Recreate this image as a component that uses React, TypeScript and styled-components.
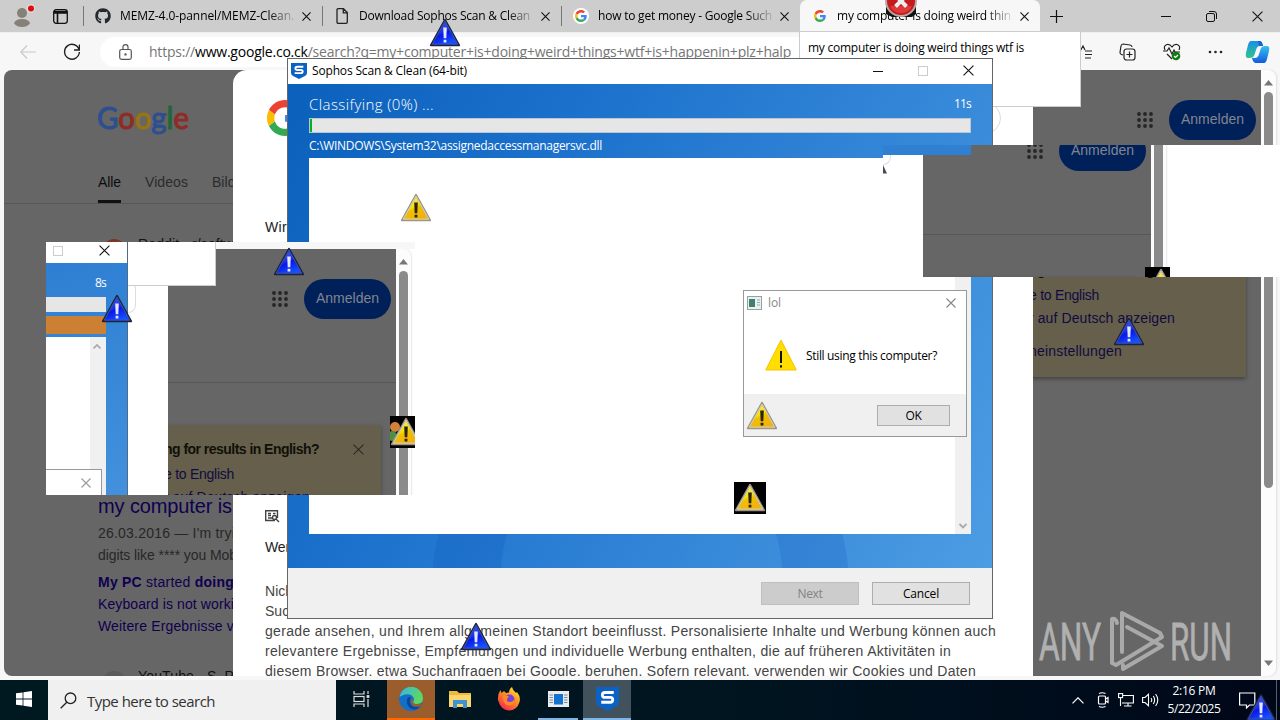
import React, { useLayoutEffect, useRef, useState } from "react";
import styled, { createGlobalStyle } from "styled-components";
import { FaGithub } from "react-icons/fa";

const GlobalStyle = createGlobalStyle`
  * {
    box-sizing: border-box;
  }

  body {
    margin: 0;
    overflow: hidden;
    font-family: "Open Sans", "Noto Sans", sans-serif;
    font-size: 12px;
    color: #000;
  }

  svg {
    display: block;
    flex-shrink: 0;
  }
`;

/* ---------- text ---------- */

const Label = styled.span<{ $size?: number; $color?: string; $weight?: number; $arial?: boolean }>`
  display: inline-block;
  flex-shrink: 0;
  width: max-content;
  white-space: pre;
  font-size: ${(p) => p.$size || 12}px;
  line-height: 20px;
  color: ${(p) => p.$color || "#000"};
  font-weight: ${(p) => p.$weight || 400};
  font-family: ${(p) =>
    p.$arial ? '"Liberation Sans", Arial, sans-serif' : '"Open Sans", "Noto Sans", sans-serif'};
`;

type TextProps = {
  width: number;
  size?: number;
  color?: string;
  weight?: number;
  arial?: boolean;
  children: React.ReactNode;
};

// tracks the text in or out until it is exactly `width` wide
const Text: React.FC<TextProps> = ({ width, size, color, weight, arial, children }) => {
  const ref = useRef<HTMLSpanElement>(null);
  const [spacing, setSpacing] = useState(0);

  useLayoutEffect(() => {
    const el = ref.current;
    if (!el) return;
    const natural = el.getBoundingClientRect().width;
    setSpacing((width - natural) / (el.textContent || " ").length);
  }, [width]);

  return (
    <Label
      ref={ref}
      $size={size}
      $color={color}
      $weight={weight}
      $arial={arial}
      style={{ letterSpacing: spacing }}
    >
      {children}
    </Label>
  );
};

/* ---------- icons ---------- */

const Cross: React.FC<{ size?: number; color?: string }> = ({ size = 10, color = "#111" }) => (
  <svg width={size} height={size} viewBox="0 0 10 10" stroke={color} strokeWidth={11 / size}>
    <path d="M0.5 0.5L9.5 9.5M9.5 0.5L0.5 9.5" />
  </svg>
);

const GoogleG: React.FC<{ size: number }> = ({ size }) => (
  <svg width={size} height={size} viewBox="0 0 48 48">
    <path fill="#EA4335" d="M24 9.5c3.54 0 6.71 1.22 9.21 3.6l6.85-6.85C35.9 2.38 30.47 0 24 0 14.62 0 6.51 5.38 2.56 13.22l7.98 6.19C12.43 13.72 17.74 9.5 24 9.5z" />
    <path fill="#4285F4" d="M46.98 24.55c0-1.57-.15-3.09-.38-4.55H24v9.02h12.94c-.58 2.96-2.26 5.48-4.78 7.18l7.73 6c4.51-4.18 7.09-10.36 7.09-17.65z" />
    <path fill="#FBBC05" d="M10.53 28.59c-.48-1.45-.76-2.99-.76-4.59s.27-3.14.76-4.59l-7.98-6.19C.92 16.46 0 20.12 0 24c0 3.88.92 7.54 2.56 10.78l7.97-6.19z" />
    <path fill="#34A853" d="M24 48c6.48 0 11.93-2.13 15.89-5.81l-7.73-6c-2.15 1.45-4.92 2.3-8.16 2.3-6.26 0-11.57-4.22-13.47-9.91l-7.98 6.19C6.51 42.62 14.62 48 24 48z" />
  </svg>
);

const SophosShield: React.FC<{ width: number; height: number }> = ({ width, height }) => (
  <svg width={width} height={height} viewBox="0 0 24 24" preserveAspectRatio="none">
    <path d="M0 0H24V15Q24 18 21 19.5L12 24L3 19.5Q0 18 0 15Z" fill="#0b62c4" />
    <path d="M18.5 5.5H9.5Q6.6 5.5 6.6 8T9.5 10.4H15Q17.5 10.4 17.5 12.8T15 15.2H5.5" fill="none" stroke="#fff" strokeWidth="2.9" />
  </svg>
);

const WarnIcon: React.FC<{ blue?: boolean }> = ({ blue }) => {
  const id = blue ? "warnBlue" : "warnYellow";
  return (
    <svg width="32" height="32" viewBox="0 0 32 32">
      <defs>
        <linearGradient id={id} x1="0" y1="0" x2="0.5" y2="1">
          <stop offset="0" stopColor={blue ? "#5a78ff" : "#fff59a"} />
          <stop offset="0.55" stopColor={blue ? "#1a2df0" : "#f8e000"} />
          <stop offset="0.62" stopColor={blue ? "#0a18e8" : "#f2bf00"} />
          <stop offset="1" stopColor={blue ? "#1450ff" : "#f3b010"} />
        </linearGradient>
      </defs>
      <path d="M16 3L30 28.2H2Z" fill={`url(#${id})`} stroke={blue ? "#1b2242" : "#9b968a"} strokeWidth="2.2" strokeLinejoin="round" />
      <path d="M16 4.2L28.7 27.2H3.3Z" fill="none" stroke={blue ? "#3f5cc9" : "#e8dfae"} strokeWidth="0.9" />
      <path d="M14.2 10.5H17.8L17.3 21.3H14.7ZM14.6 22.7H17.4V25.6H14.6Z" fill={blue ? "#e4e8ff" : "#26250f"} />
    </svg>
  );
};

const ErrorIcon = () => (
  <svg width="34" height="34" viewBox="0 0 34 34">
    <path d="M2 19V30L8 33H28L32 30V19Z" fill="#111" />
    <circle cx="17" cy="17" r="15" fill="#c51a1e" stroke="#b9a9a9" strokeWidth="2" />
    <path d="M6 22A12 12 0 0 0 28 22Z" fill="#de3a37" />
    <path d="M11.5 11.5L22.5 22.5M22.5 11.5L11.5 22.5" stroke="#eee" strokeWidth="4" />
  </svg>
);

/* ---------- browser chrome ---------- */

const Desktop = styled.div`
  position: relative;
  width: 1280px;
  height: 720px;
  overflow: hidden;
  display: flex;
  flex-direction: column;
  background: #f7f7f7;
`;

const TabStrip = styled.div`
  display: flex;
  align-items: center;
  height: 32px;
  background: #cdcdcd;
`;

const StripIcons = styled.div`
  display: flex;
  align-items: center;
  gap: 18px;
  width: 83px;
  padding-left: 13px;
`;

const Tab = styled.div<{ $active?: boolean; $width: number }>`
  display: flex;
  align-items: center;
  width: ${(p) => p.$width}px;
  height: ${(p) => (p.$active ? "32px" : "20px")};
  padding: 0 10px 0 11px;
  border-left: 1px solid ${(p) => (p.$active ? "#f7f7f7" : "#777")};
  border-radius: ${(p) => (p.$active ? "7px 7px 0 0" : "0")};
  background: ${(p) => (p.$active ? "#f7f7f7" : "transparent")};
`;

const TabIcon = styled.div<{ $white?: boolean }>`
  display: grid;
  place-items: center;
  width: 16px;
  height: 16px;
  margin-right: 9px;
  flex-shrink: 0;
  border-radius: 50%;
  background: ${(p) => (p.$white ? "#fff" : "transparent")};
`;

const TabTitle = styled.div`
  flex: 1;
  min-width: 0;
  overflow: hidden;
  display: flex;
  mask-image: linear-gradient(90deg, #000 148px, transparent 178px);
`;

const TabClose = styled.div`
  flex-shrink: 0;
  margin-right: 1px;
`;

const CaptionButtons = styled.div`
  display: flex;
  align-items: center;
  flex: 1;
  padding: 0 17px 0 10px;
  justify-content: space-between;
`;

const WindowControls = styled.div`
  display: flex;
  align-items: center;
  gap: 35px;
`;

const Toolbar = styled.div`
  display: flex;
  align-items: center;
  height: 38px;
  padding-left: 20px;
  border-top: 1px solid #efefef;
  background: #f7f7f7;
`;

const AddressBar = styled.div`
  display: flex;
  align-items: center;
  gap: 17px;
  width: 960px;
  height: 30px;
  margin-left: 20px;
  padding-left: 19px;
  border-radius: 15px;
  background: #fff;
`;

const ToolbarIcons = styled.div`
  display: flex;
  align-items: center;
  flex: 1;
  gap: 27px;
  padding-left: 14px;

  & > svg:last-child {
    margin-left: -5px;
  }
`;

const Toolbox = () => (
  <ToolbarIcons>
    <svg width="18" height="18" viewBox="0 0 18 18" fill="none" stroke="#222" strokeWidth="1.2">
      <path d="M11 8H18M11 11.5H18M11 15H17M3 8L6.5 7.5L9 3L11 7M4 16L5 11L2 8" />
    </svg>
    <svg width="17" height="18" viewBox="0 0 17 18" fill="none" stroke="#222" strokeWidth="1.2">
      <path d="M4 12L2.5 11.5Q1 11 1 9.500L2 3Q2.300 1 4 1L11 2Q13 2.500 13 4" />
      <rect x="5" y="6" width="11" height="11" rx="2.500" />
      <path d="M10.500 8.500V14.500M7.500 11.500H13.500" />
    </svg>
    <svg width="18" height="18" viewBox="0 0 18 18" fill="none" stroke="#222" strokeWidth="1.2">
      <path d="M2 7Q0 3 4 1.500Q7 1 9 4Q11 1 14 1.500Q18 3 16 7M0 8H4L6 5L9 11L11 7L12 9H17M4 11L9 16" />
      <circle cx="13" cy="13" r="4.300" fill="#127a12" stroke="none" />
      <path d="M11 13L12.500 14.500L15 12" stroke="#fff" />
    </svg>
    <svg width="15" height="4" viewBox="0 0 15 4" fill="#222">
      <circle cx="2" cy="2" r="1.300" />
      <circle cx="7.500" cy="2" r="1.300" />
      <circle cx="13" cy="2" r="1.300" />
    </svg>
    <svg width="25" height="24" viewBox="0 0 25 24">
      <defs>
        <linearGradient id="copilotA" x1="0" y1="0" x2="0" y2="1">
          <stop offset="0" stopColor="#1a8fe8" />
          <stop offset="1" stopColor="#2fc48d" />
        </linearGradient>
        <linearGradient id="copilotB" x1="0" y1="0" x2="0" y2="1">
          <stop offset="0" stopColor="#35c3ef" />
          <stop offset="1" stopColor="#1559e0" />
        </linearGradient>
      </defs>
      <path d="M6 1H14Q17 1 18 6H15Q12 6 11 10L9 16Q8 18 5 18H3Q0 18 1 13L3 5Q4 1 6 1Z" fill="url(#copilotA)" />
      <path d="M19 23H11Q8 23 7 18H10Q13 18 14 14L16 8Q17 6 20 6H22Q25 6 24 11L22 19Q21 23 19 23Z" fill="url(#copilotB)" />
      <path d="M13 1H15Q17 1 18 6H14Z" fill="#1c5fd8" />
    </svg>
  </ToolbarIcons>
);

/* ---------- page behind the consent sheet ---------- */

const PageFrame = styled.div`
  display: flex;
  height: 610px;
  padding: 0 4px 4px;
`;

const Page = styled.div`
  display: flex;
  width: 1257px;
  height: 606px;
  overflow: hidden;
  border-radius: 8px 0 0 8px;
  background: #666;
`;

const ResultsColumn = styled.div`
  display: flex;
  flex-direction: column;
  width: 229px;
  height: 606px;
  overflow: hidden;

  & > * {
    flex-shrink: 0;
  }
`;

const LogoRow = styled.div`
  height: 101px;
  padding: 30px 0 0 94px;
`;

const PageTabs = styled.div`
  display: flex;
  gap: 24px;
  height: 33px;
  padding-left: 94px;
  border-bottom: 1px solid #575757;
`;

const PageTab = styled.div<{ $active?: boolean }>`
  height: 32px;
  padding-top: 1px;
  flex-shrink: 0;
  border-bottom: 3px solid ${(p) => (p.$active ? "#111" : "transparent")};
`;

const SourceRow = styled.div`
  display: flex;
  align-items: center;
  gap: 12px;
  height: 24px;
  margin-top: 28px;
  padding-left: 98px;
`;

const SourceDot = styled.div<{ $color: string }>`
  width: 24px;
  height: 24px;
  margin-top: 14px;
  flex-shrink: 0;
  border-radius: 50%;
  background: ${(p) => p.$color};
`;

const ResultBody = styled.div`
  display: flex;
  flex-direction: column;
  gap: 2px;
  height: 140px;
  margin-top: 240px;
  padding-left: 94px;
`;

const ResultLine = styled.div`
  height: 20px;
  margin-top: 5px;
`;

const SideColumn = styled.div`
  width: 228px;
  height: 606px;
  flex-shrink: 0;
  overflow: hidden;
  background: #666;
`;

const SideHeader = styled.div`
  display: flex;
  justify-content: flex-end;
  gap: 16px;
  height: 134px;
  padding: 30px 5px 0 0;
  border-bottom: 1px solid #575757;
`;

const AppsGrid = styled.svg`
  margin-top: 12px;
`;

const SignIn = styled.div`
  display: grid;
  place-items: center;
  width: 87px;
  height: 40px;
  padding-bottom: 2px;
  border-radius: 20px;
  background: #00205a;
`;

const LanguageCard = styled.div`
  display: flex;
  flex-direction: column;
  width: 226px;
  height: 131px;
  margin: 42px 0 0 -13px;
  padding: 14px 17px 0 9px;
  background: #665f4b;
  box-shadow: 0 2px 4px rgba(0, 0, 0, 0.35);
`;

const CardHeading = styled.div`
  display: flex;
  align-items: center;
  justify-content: space-between;
  height: 20px;
  margin-bottom: 5px;
`;

const CardLink = styled.div<{ $gap: number }>`
  height: 20px;
  margin-bottom: ${(p) => p.$gap}px;
`;

const PageSide = () => (
  <SideColumn>
    <SideHeader>
      <AppsGrid width="16" height="16" viewBox="0 0 16 16" fill="#262626">
        {[2, 8, 14].map((y) => [2, 8, 14].map((x) => <circle key={`${x}-${y}`} cx={x} cy={y} r="1.900" />))}
      </AppsGrid>
      <SignIn>
        <Text width={63} size={14} color="#80858f" arial>
          Anmelden
        </Text>
      </SignIn>
    </SideHeader>
    <LanguageCard>
      <CardHeading>
        <Text width={155} size={14} color="#101008" weight={700} arial>
          ng for results in English?
        </Text>
        <Cross size={11} color="#2a2a24" />
      </CardHeading>
      <CardLink $gap={3}>
        <Text width={70} size={14} color="#100b42" arial>
          e to English
        </Text>
      </CardLink>
      <CardLink $gap={13}>
        <Text width={146} size={14} color="#100b42" arial>
          r auf Deutsch anzeigen
        </Text>
      </CardLink>
      <Text width={93} size={14} color="#100b42" arial>
        neinstellungen
      </Text>
    </LanguageCard>
  </SideColumn>
);

const ScrollTrack = styled.div`
  display: flex;
  flex-direction: column;
  align-items: center;
  width: 15px;
  height: 606px;
  padding: 9px 0 9px;
  flex-shrink: 0;
  border-radius: 0 8px 8px 0;
  background: #fcfcfc;
  box-shadow: 1px 0 2px rgba(0, 0, 0, 0.1);
`;

const ScrollThumb = styled.div`
  width: 9px;
  height: 396px;
  margin: 6px 0 auto;
  border-radius: 5px;
  background: #8a8a8a;
`;

const PageScrollbar = () => (
  <ScrollTrack>
    <svg width="9" height="7" viewBox="0 0 9 7" fill="#777">
      <path d="M4.500 1L9 6.500H0Z" />
    </svg>
    <ScrollThumb />
    <svg width="9" height="7" viewBox="0 0 9 7" fill="#777">
      <path d="M4.500 6L9 0.500H0Z" />
    </svg>
  </ScrollTrack>
);

const ConsentSheet = styled.div`
  display: flex;
  flex-direction: column;
  width: 800px;
  height: 606px;
  padding: 30px 32px 0;
  flex-shrink: 0;
  border-radius: 14px 14px 0 0;
  background: #fff;
`;

const SheetHeader = styled.div`
  display: flex;
  justify-content: space-between;
  height: 116px;
  margin-bottom: 1px;
  padding-left: 2px;
  flex-shrink: 0;
`;

const LanguagePill = styled.div`
  width: 120px;
  height: 32px;
  margin-top: 2px;
  border: 1px solid #dadce0;
  border-radius: 16px;
`;

const SheetIcon = styled.div`
  margin: 272px 0 14px;
`;

const SheetParagraph = styled.div`
  display: flex;
  flex-direction: column;
  margin-top: 24px;
`;

/* ---------- scan window ---------- */

const ScanWindow = styled.div`
  position: absolute;
  left: 287px;
  top: 58px;
  width: 706px;
  height: 561px;
  display: flex;
  flex-direction: column;
  border: 1px solid #666;
  background: #f0f0f0;
`;

const ScanTitle = styled.div`
  display: flex;
  align-items: center;
  height: 25px;
  padding: 0 18px 2px 3px;
  gap: 5px;
  background: #fff;
`;

const ScanControls = styled.div`
  display: flex;
  align-items: center;
  gap: 35px;
  margin-left: auto;
`;

const ScanBody = styled.div`
  display: grid;
  grid-template-rows: 34px 15px 25px 376px;
  height: 484px;
  padding: 0 21px;
  background: linear-gradient(118deg, #0a60bb 0%, #1a70cb 30%, #2f82d5 60%, #4c9de3 100%);
`;

const ScanStatus = styled.div`
  display: flex;
  justify-content: space-between;
  align-items: center;
  padding-top: 5px;
`;

const ProgressTrack = styled.div`
  border: 1px solid #bcc6d0;
  background: #e6e6e6;
`;

const ProgressFill = styled.div`
  height: 13px;
  background: #06b025;
`;

const ScanPath = styled.div`
  padding-top: 3px;
`;

const ScanList = styled.div`
  display: flex;
  justify-content: flex-end;
  background: #fff;
`;

const ListScroll = styled.div`
  display: flex;
  align-items: flex-end;
  justify-content: center;
  width: 16px;
  padding-bottom: 5px;
  background: #f0f0f0;
`;

const RingStrip = styled.svg`
  margin-left: 123px;
`;

const ScanFooter = styled.div`
  display: flex;
  justify-content: flex-end;
  gap: 13px;
  padding: 14px 22px 0 0;
`;

const Button = styled.div<{ $width: number; $disabled?: boolean }>`
  display: grid;
  place-items: center;
  width: ${(p) => p.$width}px;
  height: ${(p) => (p.$width > 80 ? 23 : 21)}px;
  border: 1px solid ${(p) => (p.$disabled ? "#bfbfbf" : "#adadad")};
  background: ${(p) => (p.$disabled ? "#ccc" : "#e1e1e1")};
`;

/* ---------- message box ---------- */

const MessageBox = styled.div`
  position: absolute;
  left: 743px;
  top: 290px;
  width: 224px;
  height: 147px;
  display: flex;
  flex-direction: column;
  border: 1px solid #999;
  background: #fff;
`;

const MessageTitle = styled.div`
  display: flex;
  align-items: center;
  gap: 6px;
  height: 24px;
  padding: 0 10px 0 3px;

  & > svg:last-child {
    margin-left: auto;
  }
`;

const MessageContent = styled.div`
  display: flex;
  align-items: center;
  gap: 9px;
  height: 79px;
  padding: 2px 0 0 21px;

  & > svg {
    margin-top: -2px;
  }
`;

const MessageFooter = styled.div`
  display: flex;
  justify-content: flex-end;
  flex: 1;
  padding: 11px 16px 0 0;
  background: #f0f0f0;
`;

/* ---------- torn copies of the screen ---------- */

const Shard = styled.div<{ $x: number; $y: number; $w: number; $h: number }>`
  position: absolute;
  left: ${(p) => p.$x}px;
  top: ${(p) => p.$y}px;
  width: ${(p) => p.$w}px;
  height: ${(p) => p.$h}px;
  overflow: hidden;
  display: flex;
  background: #fff;
`;

const ShardSlice = styled.div<{ $shift: number }>`
  display: flex;
  align-items: flex-start;
  height: 606px;
  margin-top: ${(p) => p.$shift}px;
`;

const PillArc = styled.div`
  width: 8px;
  height: 32px;
  margin-top: 32px;
  border: 1px solid #dadce0;
  border-left: none;
  border-radius: 0 16px 16px 0;
`;

const SheetGap = styled.div`
  width: 40px;
  height: 606px;
  background: #fff;
`;

const BluePatch = styled.div`
  position: absolute;
  left: 883px;
  top: 145px;
  width: 88px;
  height: 10px;
  background: #2f80d3;
`;

const TornCorner = styled.svg`
  position: absolute;
  left: 883px;
  top: 164px;
`;

const MiniWindow = styled.div`
  display: flex;
  flex-direction: column;
  width: 82px;
  height: 253px;
  border-right: 1px solid #4d6c8c;
  background: linear-gradient(160deg, #2c7dd2, #4391dc);
`;

const MiniTitle = styled.div`
  display: flex;
  align-items: center;
  gap: 36px;
  height: 21px;
  padding: 0 0 4px 7px;
  background: #fff;
`;

const MiniCounter = styled.div`
  display: flex;
  justify-content: flex-end;
  height: 34px;
  padding: 10px 21px 0 0;
`;

const MiniBar = styled.div<{ $color: string; $height: number; $gap: number }>`
  width: 60px;
  height: ${(p) => p.$height}px;
  margin-bottom: ${(p) => p.$gap}px;
  background: ${(p) => p.$color};
`;

const MiniList = styled.div`
  display: flex;
  flex-direction: column;
  justify-content: space-between;
  width: 60px;
  flex: 1;
  background: linear-gradient(90deg, #fff 44px, #f0f0f0 44px);
`;

const MiniArrow = styled.div`
  display: flex;
  justify-content: flex-end;
  padding: 7px 5px 0 0;
`;

const MiniDialog = styled.div`
  display: flex;
  align-items: center;
  justify-content: flex-end;
  width: 56px;
  height: 26px;
  padding-right: 10px;
  border: 1px solid #999;
  border-width: 1px 1px 0 0;
  background: #fff;
`;

const MiniTooltip = styled.div`
  position: absolute;
  left: 82px;
  top: 0;
  width: 88px;
  height: 44px;
  border: 1px solid #ccc;
  border-width: 0 1px 1px 0;
  background: #fff;
`;

const ToolbarStrip = styled.div`
  position: absolute;
  left: 170px;
  top: 0;
  width: 199px;
  height: 7px;
  background: #f7f7f7;
`;

const ScrapIcon = styled.div`
  position: absolute;
  left: 0;
  top: 0;

  & + svg {
    position: relative;
  }
`;

/* ---------- things on top ---------- */

const TabTooltip = styled.div`
  position: absolute;
  left: 799px;
  top: 31px;
  width: 282px;
  height: 76px;
  padding: 6px 8px;
  border: 1px solid #ccc;
  background: #fff;
`;

const Sticker = styled.div<{ $x: number; $y: number; $clip?: number; $black?: boolean }>`
  position: absolute;
  left: ${(p) => p.$x}px;
  top: ${(p) => p.$y}px;
  width: ${(p) => p.$clip || 34}px;
  height: ${(p) => (p.$black ? 32 : 34)}px;
  overflow: hidden;
  background: ${(p) => (p.$black ? "#000" : "transparent")};
`;

const Watermark = styled.svg`
  position: absolute;
  left: 1036px;
  top: 606px;
`;

/* ---------- taskbar ---------- */

const Taskbar = styled.div`
  display: flex;
  height: 40px;
  background: linear-gradient(90deg, #001820 0%, #001420 60%, #000718 100%);
`;

const TaskButton = styled.div<{ $width: number; $bg?: string; $line?: string; $gap?: number }>`
  display: grid;
  place-items: center;
  width: ${(p) => p.$width}px;
  height: 40px;
  margin-right: ${(p) => p.$gap || 0}px;
  background: ${(p) => p.$bg || "transparent"};
  border-bottom: 2px solid ${(p) => p.$line || "transparent"};
`;

const SearchBox = styled.div`
  display: flex;
  align-items: center;
  gap: 10px;
  width: 288px;
  padding: 1px 0 0 12px;
  background: #f0f0f0;
`;

const Tray = styled.div`
  display: flex;
  align-items: center;
  margin-left: auto;
  gap: 8px;
`;

const Clock = styled.div`
  display: flex;
  flex-direction: column;
  align-items: center;
  width: 58px;
  margin: 0 3px 0 -2px;

  & > span {
    line-height: 18px;
  }
`;

const TrayEnd = styled.div`
  display: flex;
  align-items: center;
  width: 43px;
  height: 40px;
  margin-right: 3px;
  padding-left: 5px;
  border-right: 1px solid #55606a;
`;

const blueWarnings = [
  [429, 17],
  [273, 246],
  [101, 293],
  [1113, 316],
  [460, 621],
  [1245, 692],
];

const paragraph: [string, number][] = [
  ["Nicht", 32],
  ["Such", 32],
  ["gerade ansehen, und Ihrem allgemeinen Standort beeinflusst. Personalisierte Inhalte und Werbung können auch", 731],
  ["relevantere Ergebnisse, Empfehlungen und individuelle Werbung enthalten, die auf früheren Aktivitäten in", 686],
  ["diesem Browser, etwa Suchanfragen bei Google, beruhen. Sofern relevant, verwenden wir Cookies und Daten", 711],
];

const App: React.FC = () => {
  return (
    <>
      <GlobalStyle />
      <Desktop>
        <TabStrip>
          <StripIcons>
            <svg width="22" height="24" viewBox="0 0 22 24">
              <circle cx="9" cy="9" r="5" fill="#858078" />
              <path d="M1 19.500Q2 15 9 15T17 19.500Q14 23 9 23T1 19.500Z" fill="#858078" />
              <circle cx="18" cy="4.500" r="4.300" fill="#ddd" />
              <circle cx="18" cy="4.500" r="3" fill="#e00b0b" />
            </svg>
            <svg width="15" height="15" viewBox="0 0 15 15" fill="none" stroke="#111" strokeWidth="1.300">
              <rect x="0.700" y="0.700" width="13.600" height="13.600" rx="2.500" />
              <path d="M1 2.500H14M1 4H14M4.500 4V14" strokeWidth="1.600" />
            </svg>
          </StripIcons>
          <Tab $width={239}>
            <TabIcon>
              <FaGithub size={16} color="#24292f" />
            </TabIcon>
            <TabTitle>
              <Text width={174}>MEMZ-4.0-pannel/MEMZ-Clean.</Text>
            </TabTitle>
            <TabClose>
              <Cross size={9} />
            </TabClose>
          </Tab>
          <Tab $width={239}>
            <TabIcon>
              <svg width="12" height="16" viewBox="0 0 12 16" fill="none" stroke="#222" strokeWidth="1.300">
                <path d="M1 2Q1 0.700 2.300 0.700H7.500L11.300 4.500V14Q11.300 15.300 10 15.300H2.300Q1 15.300 1 14ZM7.300 1V4.800H11" />
              </svg>
            </TabIcon>
            <TabTitle>
              <Text width={171}>Download Sophos Scan & Clean</Text>
            </TabTitle>
            <TabClose>
              <Cross size={9} />
            </TabClose>
          </Tab>
          <Tab $width={239}>
            <TabIcon $white>
              <GoogleG size={12} />
            </TabIcon>
            <TabTitle>
              <Text width={174}>how to get money - Google Such</Text>
            </TabTitle>
            <TabClose>
              <Cross size={9} />
            </TabClose>
          </Tab>
          <Tab $width={240} $active>
            <TabIcon>
              <GoogleG size={12} />
            </TabIcon>
            <TabTitle>
              <Text width={174}>my computer is doing weird thin</Text>
            </TabTitle>
            <TabClose>
              <Cross size={9} />
            </TabClose>
          </Tab>
          <CaptionButtons>
            <svg width="13" height="13" viewBox="0 0 13 13" stroke="#111" strokeWidth="1.200">
              <path d="M6.500 0V13M0 6.500H13" />
            </svg>
            <WindowControls>
              <svg width="10" height="10" viewBox="0 0 10 10" stroke="#111">
                <path d="M0 5.500H10" />
              </svg>
              <svg width="11" height="11" viewBox="0 0 11 11" fill="none" stroke="#111">
                <rect x="0.500" y="2.500" width="8" height="8" rx="1.500" />
                <path d="M3 0.500H8Q10.500 0.500 10.500 3V8" />
              </svg>
              <Cross size={11} />
            </WindowControls>
          </CaptionButtons>
        </TabStrip>

        <Toolbar>
          <svg width="17" height="14" viewBox="0 0 17 14" fill="none" stroke="#c8c8c8" strokeWidth="1.200">
            <path d="M16 7H1M7 0.500L0.800 7L7 13.500" />
          </svg>
          <svg width="43" height="18" viewBox="-27 0 43 18" fill="none" stroke="#222" strokeWidth="1.400">
            <path d="M15.200 7A7.400 7.400 0 1 0 15.400 9M15.500 1.500V7H10" />
          </svg>
          <AddressBar>
            <svg width="13" height="16" viewBox="0 0 13 16" fill="none" stroke="#555" strokeWidth="1.200">
              <rect x="0.700" y="5.500" width="11.600" height="9.800" rx="1.800" />
              <path d="M4 5.500V3Q4 0.700 6.500 0.700T9 3V5.500" />
              <circle cx="6.500" cy="10.400" r="0.600" fill="#555" />
            </svg>
            <Text width={642} size={14} color="#767676">
              https://
              <Label $size={14}>www.google.co.ck</Label>
              /search?q=my+computer+is+doing+weird+things+wtf+is+happenin+plz+halp
            </Text>
          </AddressBar>
          <Toolbox />
        </Toolbar>

        <PageFrame>
          <Page>
            <ResultsColumn>
              <LogoRow>
                <svg width="95" height="42" viewBox="0 0 95 42" fontFamily="Lato, sans-serif" fontSize="31" strokeWidth="1.100">
                  <text x="-1" y="29" textLength="92" lengthAdjust="spacingAndGlyphs">
                    <tspan fill="#2c4f8f" stroke="#2c4f8f">G</tspan>
                    <tspan fill="#8e2c25" stroke="#8e2c25">o</tspan>
                    <tspan fill="#967413" stroke="#967413">o</tspan>
                    <tspan fill="#2c4f8f" stroke="#2c4f8f">g</tspan>
                    <tspan fill="#226637" stroke="#226637">l</tspan>
                    <tspan fill="#8e2c25" stroke="#8e2c25">e</tspan>
                  </text>
                </svg>
              </LogoRow>
              <PageTabs>
                <PageTab $active>
                  <Text width={23} size={14} color="#0c0c0c" arial>
                    Alle
                  </Text>
                </PageTab>
                <PageTab>
                  <Text width={43} size={14} color="#2b2b2b" arial>
                    Videos
                  </Text>
                </PageTab>
                <PageTab>
                  <Text width={36} size={14} color="#2b2b2b" arial>
                    Bilder
                  </Text>
                </PageTab>
              </PageTabs>
              <SourceRow>
                <SourceDot $color="#7a3622" />
                <Text width={96} size={14} color="#111" arial>
                  Reddit · r/softw
                </Text>
              </SourceRow>
              <ResultBody>
                <Text width={134} size={20} color="#10004f" arial>
                  my computer is
                </Text>
                <ResultLine>
                  <Text width={137} size={14} color="#272727" arial>
                    26.03.2016 — I'm tryi
                  </Text>
                </ResultLine>
                <Text width={139} size={14} color="#272727" arial>
                  digits like **** you Mob
                </Text>
                <ResultLine>
                  <Text width={136} size={14} color="#10004f" arial>
                    <b>My PC</b> started <b>doing</b>
                  </Text>
                </ResultLine>
                <Text width={136} size={14} color="#10004f" arial>
                  Keyboard is not worki
                </Text>
                <Text width={136} size={14} color="#10004f" arial>
                  Weitere Ergebnisse v
                </Text>
              </ResultBody>
              <SourceRow>
                <SourceDot $color="#5c5c5c" />
                <Text width={96} size={14} color="#111" arial>
                  YouTube · S. P
                </Text>
              </SourceRow>
            </ResultsColumn>

            <ConsentSheet>
              <SheetHeader>
                <GoogleG size={36} />
                <LanguagePill />
              </SheetHeader>
              <Text width={22} size={14} color="#202124" arial>
                Wir
              </Text>
              <SheetIcon>
                <svg width="15" height="14" viewBox="0 0 15 14" fill="none" stroke="#444" strokeWidth="1.400">
                  <path d="M10 11.500H0.700V1.700H12.500V9M3 4.500H6M3 6.500H6M8 4.500H10.500M3 9H7" />
                  <circle cx="9.500" cy="8.500" r="2" />
                  <path d="M11 10L14 13" />
                </svg>
              </SheetIcon>
              <Text width={25} size={14} color="#202124" arial>
                Wer
              </Text>
              <SheetParagraph>
                {paragraph.map(([line, width]) => (
                  <Text key={line} width={width} size={14} color="#444" arial>
                    {line}
                  </Text>
                ))}
              </SheetParagraph>
            </ConsentSheet>

            <PageSide />
          </Page>
          <PageScrollbar />
        </PageFrame>

        <Taskbar>
          <TaskButton $width={48}>
            <svg width="16" height="16" viewBox="0 0 16 16" fill="#fff">
              <path d="M0 2.300L6.600 1.400V7.600H0ZM7.400 1.300L16 0V7.600H7.400ZM0 8.400H6.600V14.600L0 13.700ZM7.400 8.400H16V16L7.400 14.700Z" />
            </svg>
          </TaskButton>
          <SearchBox>
            <svg width="17" height="17" viewBox="0 0 17 17" fill="none" stroke="#222" strokeWidth="1.300">
              <circle cx="10.500" cy="6.300" r="5.300" />
              <path d="M6.800 10.200L0.700 16.300" />
            </svg>
            <Text width={128} size={15} color="#333">
              Type here to search
            </Text>
          </SearchBox>
          <TaskButton $width={51}>
            <svg width="17" height="16" viewBox="0 0 17 16" fill="none" stroke="#ddd" strokeWidth="1.200">
              <path d="M1 0V3H11V0M1 16V13H11V16M15 0V3M15 8V16" />
              <rect x="1" y="5.500" width="10" height="5" />
              <rect x="14.200" y="4.700" width="1.600" height="1.600" fill="#ddd" />
            </svg>
          </TaskButton>
          <TaskButton $width={48} $bg="#9b5d2b" $line="#ff6a00">
            <svg width="24" height="24" viewBox="0 0 24 24">
              <defs>
                <linearGradient id="edgeTop" x1="0" y1="0" x2="1" y2="0.300">
                  <stop offset="0" stopColor="#35b4e8" />
                  <stop offset="1" stopColor="#5fd860" />
                </linearGradient>
              </defs>
              <circle cx="12" cy="12" r="12" fill="#1370c8" />
              <path d="M0.500 10A11.800 11.800 0 0 1 24 11.500Q24 16.500 18.500 17Q14 17 14 15Q15.500 13 14.500 10.500Q12 6 6 7.500Q2 8.500 0.500 10Z" fill="url(#edgeTop)" />
              <path d="M8.500 11Q6 18 12 21.500Q17 24 21.500 19.500Q14 21.500 11.500 17Q10 14 12 10.500Q10 9.500 8.500 11Z" fill="#0c479b" />
              <path d="M14 15Q14 17.300 18.500 17Q21 17 22.500 16L21.500 19Q16 20.500 13 18Q11 15 12.500 12Q15.500 12 14 15Z" fill="#9b5d2b" />
            </svg>
          </TaskButton>
          <TaskButton $width={49}>
            <svg width="22" height="18" viewBox="0 0 22 18">
              <path d="M0 1H8L10 3H22V17H0Z" fill="#f0b93a" />
              <path d="M0 5H22V17H0Z" fill="#fbd66c" />
              <path d="M4 10H18V18H14V14H8V18H4Z" fill="#3f93d2" />
            </svg>
          </TaskButton>
          <TaskButton $width={49} $gap={5}>
            <svg width="24" height="24" viewBox="0 0 24 24">
              <defs>
                <linearGradient id="foxFire" x1="0.900" y1="0" x2="0.200" y2="1">
                  <stop offset="0" stopColor="#fff04a" />
                  <stop offset="0.400" stopColor="#ff9a1f" />
                  <stop offset="1" stopColor="#f5204e" />
                </linearGradient>
              </defs>
              <path d="M1 13Q0.500 7 3.500 3L4.500 6L7 4L9 6L12 5.500Q12 2 15 0Q15.500 3 19 6L20 5Q24 10 22.500 15Q20 23.500 12 23.500T1 13Z" fill="url(#foxFire)" />
              <circle cx="12.500" cy="12.500" r="5" fill="#7b3fe0" />
              <path d="M6 9Q9 8 12 9.500L10 12Q9 15 13 15Q16 15 17.500 12Q18 18 12 18.500Q6 18 6 9Z" fill="#ff8a22" />
            </svg>
          </TaskButton>
          <TaskButton $width={40} $line="#7fb6e6" $gap={5}>
            <svg width="21" height="16" viewBox="0 0 21 16">
              <rect width="21" height="16" fill="#e9edf0" />
              <path d="M1.500 4H5M1.500 6.500H5M1.500 9H5M1.500 11.500H5M16 4H19.500M16 6.500H19.500M16 9H19.500M16 11.500H19.500" stroke="#7b8794" />
              <rect x="6" y="3" width="9" height="10.500" fill="#1473d0" />
            </svg>
          </TaskButton>
          <TaskButton $width={48} $bg="#42525d" $line="#7fb6e6">
            <SophosShield width={23} height={24} />
          </TaskButton>
          <Tray>
            <svg width="16" height="7" viewBox="0 0 16 7" fill="none" stroke="#fff" strokeWidth="1.200">
              <path d="M0.500 6.300L6 0.800L11.500 6.300" />
            </svg>
            <svg width="14" height="16" viewBox="0 0 14 16" fill="none" stroke="#fff" strokeWidth="1.200">
              <rect x="2.500" y="4" width="7" height="8" rx="1" />
              <path d="M9.500 7L12 5.500V10.500L9.500 9M3 1.500Q6 0 9.500 1.500M3 14.500Q6 16 9.500 14.500" />
            </svg>
            <svg width="16" height="14" viewBox="0 0 16 14" fill="none" stroke="#fff" strokeWidth="1.100">
              <path d="M5 2.500H15.400V10H4M10 10V13M6 13H13.500M2.500 5V13" />
              <rect x="0.600" y="0.600" width="4" height="4" />
            </svg>
            <svg width="17" height="14" viewBox="0 0 17 14" fill="none" stroke="#fff" strokeWidth="1.100">
              <path d="M0.600 4.500H3L6.500 1.300V12.700L3 9.500H0.600ZM9 5Q10.500 7 9 9M11.300 3Q14 7 11.300 11M13.600 1Q18 7 13.600 13" />
            </svg>
            <Clock>
              <Text width={43} color="#fff">2:16 PM</Text>
              <Text width={53} color="#fff">5/22/2025</Text>
            </Clock>
            <TrayEnd>
              <svg width="17" height="17" viewBox="0 0 17 17" fill="none" stroke="#fff" strokeWidth="1.200">
                <path d="M0.600 1H15.800V13H10.500L7.500 16V13H0.600Z" />
              </svg>
            </TrayEnd>
          </Tray>
        </Taskbar>

        <TabTooltip>
          <Text width={216}>my computer is doing weird things wtf is</Text>
        </TabTooltip>

        <ScanWindow>
          <ScanTitle>
            <SophosShield width={16} height={16} />
            <Text width={155}>Sophos Scan & Clean (64-bit)</Text>
            <ScanControls>
              <svg width="10" height="10" viewBox="0 0 10 10" stroke="#111">
                <path d="M0 5.500H10" />
              </svg>
              <svg width="10" height="10" viewBox="0 0 10 10" fill="none" stroke="#ccc">
                <rect x="0.500" y="0.500" width="9" height="9" />
              </svg>
              <Cross size={11} />
            </ScanControls>
          </ScanTitle>
          <ScanBody>
            <ScanStatus>
              <Text width={125} size={15} color="#fff" weight={300}>
                Classifying (0%) ...
              </Text>
              <Text width={17} color="#fff">
                11s
              </Text>
            </ScanStatus>
            <ProgressTrack>
              <ProgressFill style={{ width: 2 }} />
            </ProgressTrack>
            <ScanPath>
              <Text width={293} color="#fff">
                C:\WINDOWS\System32\assignedaccessmanagersvc.dll
              </Text>
            </ScanPath>
            <ScanList>
              <ListScroll>
                <svg width="8" height="6" viewBox="0 0 8 6" fill="none" stroke="#aaa" strokeWidth="1.800">
                  <path d="M0.500 1L4 4.500L7.500 1" />
                </svg>
              </ListScroll>
            </ScanList>
            <RingStrip width="420" height="34" viewBox="0 0 420 34">
              <path d="M7 0Q2 17 1 34H69Q70 17 75 0Z" fill="#1560c0" opacity="0.350" />
              <path d="M344 0Q349 17 350 34H416Q415 17 410 0Z" fill="#1f66c8" opacity="0.300" />
            </RingStrip>
          </ScanBody>
          <ScanFooter>
            <Button $width={98} $disabled>
              <Text width={25} color="#838383">Next</Text>
            </Button>
            <Button $width={98}>
              <Text width={36}>Cancel</Text>
            </Button>
          </ScanFooter>
        </ScanWindow>

        {/* right shard */}
        <Shard $x={883} $y={145} $w={397} $h={132}>
          <ShardSlice $shift={-44}>
            <SheetGap>
              <PillArc />
            </SheetGap>
            <PageSide />
            <PageScrollbar />
          </ShardSlice>
          <Sticker $x={262} $y={122} $clip={25} $black>
            <WarnIcon />
          </Sticker>
        </Shard>
        <BluePatch />
        <TornCorner width="5" height="10" viewBox="0 0 5 10">
          <path d="M0 1L4 9.500H0Z" fill="#4a4a55" />
        </TornCorner>

        {/* left shard */}
        <Shard $x={46} $y={242} $w={369} $h={253}>
          <MiniWindow>
            <MiniTitle>
              <svg width="10" height="10" viewBox="0 0 10 10" fill="none" stroke="#ccc">
                <rect x="0.500" y="0.500" width="9" height="9" />
              </svg>
              <Cross size={11} />
            </MiniTitle>
            <MiniCounter>
              <Text width={11} color="#fff">8s</Text>
            </MiniCounter>
            <MiniBar $color="#e6e6e6" $height={15} $gap={4} />
            <MiniBar $color="#cb8033" $height={18} $gap={3} />
            <MiniList>
              <MiniArrow>
                <svg width="8" height="5" viewBox="0 0 8 5" fill="none" stroke="#aaa" strokeWidth="1.700">
                  <path d="M0.500 4.500L4 1L7.500 4.500" />
                </svg>
              </MiniArrow>
              <MiniDialog>
                <Cross size={10} color="#999" />
              </MiniDialog>
            </MiniList>
          </MiniWindow>
          <ShardSlice $shift={7}>
            <SheetGap>
              <PillArc />
            </SheetGap>
            <PageSide />
            <PageScrollbar />
          </ShardSlice>
          <MiniTooltip />
          <ToolbarStrip />
          <Sticker $x={344} $y={174} $clip={25} $black>
            <ScrapIcon>
              <svg width="10" height="32" viewBox="0 0 10 32">
                <circle cx="5" cy="11" r="5" fill="#d2813b" />
                <circle cx="2" cy="20" r="5" fill="#4c8f45" />
              </svg>
            </ScrapIcon>
            <WarnIcon />
          </Sticker>
        </Shard>

        <MessageBox>
          <MessageTitle>
            <svg width="15" height="14" viewBox="0 0 15 14">
              <rect x="0.500" y="0.500" width="14" height="13" fill="#e9f0ee" stroke="#8fa39f" />
              <rect x="2" y="3" width="6" height="8" fill="#3e8074" />
              <path d="M10 4H13M10 6.500H13M10 9H13" stroke="#9ab" />
            </svg>
            <Text width={13} color="#888">lol</Text>
            <Cross size={10} color="#888" />
          </MessageTitle>
          <MessageContent>
            <svg width="32" height="32" viewBox="0 0 32 32">
              <path d="M16 1L31.300 31H0.700Z" fill="#ffde00" stroke="#f5c400" />
              <path d="M16 12V24M16 26.200V28.500" stroke="#111" strokeWidth="2" />
            </svg>
            <Text width={131}>Still using this computer?</Text>
          </MessageContent>
          <MessageFooter>
            <Button $width={73}>
              <Text width={16}>OK</Text>
            </Button>
          </MessageFooter>
        </MessageBox>

        <Sticker $x={400} $y={192}>
          <WarnIcon />
        </Sticker>
        <Sticker $x={746} $y={400}>
          <WarnIcon />
        </Sticker>
        <Sticker $x={734} $y={482} $clip={32} $black>
          <WarnIcon />
        </Sticker>
        {blueWarnings.map(([x, y]) => (
          <Sticker key={`${x}-${y}`} $x={x} $y={y}>
            <WarnIcon blue />
          </Sticker>
        ))}
        <Sticker $x={884} $y={-16}>
          <ErrorIcon />
        </Sticker>

        <Watermark width="200" height="72" viewBox="0 0 200 72" fill="#b0b0b0" fontFamily="Roboto, sans-serif" fontSize="52">
          <text x="3" y="54" textLength="62" lengthAdjust="spacingAndGlyphs" stroke="#b0b0b0" strokeWidth="0.800">
            ANY
          </text>
          <text x="134" y="54" textLength="62" lengthAdjust="spacingAndGlyphs" stroke="#b0b0b0" strokeWidth="0.800">
            RUN
          </text>
          <g fill="none" stroke="#a9a9a9" strokeWidth="4" strokeLinejoin="round" strokeLinecap="round">
            <path d="M81 17Q80 12 76 13V57L80 59L126 31L124 27L86 7V46" />
            <path d="M91 21L115 34L126 40L87 63L87 59" />
          </g>
        </Watermark>
      </Desktop>
    </>
  );
};

export default App;
